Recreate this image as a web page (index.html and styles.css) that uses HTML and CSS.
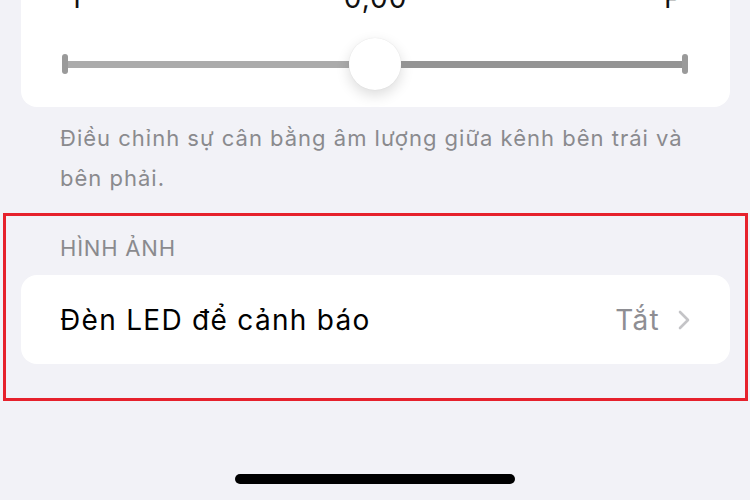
FILE: index.html
```html
<!DOCTYPE html>
<html lang="vi">
<head>
  <meta charset="UTF-8">
  <title>Âm thanh/Hình ảnh</title>
  <link rel="stylesheet" href="styles.css">
</head>
<body>
  <div class="screen">
    <div class="card balance">
      <div class="balance-labels">
        <span>T</span>
        <span>0,00</span>
        <span>P</span>
      </div>
      <div class="slider">
        <span class="cap"></span>
        <div class="track track-left"></div>
        <div class="thumb"></div>
        <div class="track track-right"></div>
        <span class="cap"></span>
      </div>
    </div>

    <p class="footnote">Điều chỉnh sự cân bằng âm lượng giữa kênh bên trái và bên phải.</p>

    <div class="highlight">
      <div class="section-title">HÌNH ẢNH</div>
      <div class="card row">
        <span class="row-label">Đèn LED để cảnh báo</span>
        <span class="row-value">Tắt</span>
        <svg class="chevron" width="12" height="20" viewBox="0 0 12 20">
          <path d="M2 2l8 8-8 8" fill="none" stroke="#c4c4c7" stroke-width="2.6" stroke-linecap="round" stroke-linejoin="round"/>
        </svg>
      </div>
    </div>

    <div class="home-indicator"></div>
  </div>
</body>
</html>
```

FILE: styles.css
```css
* {
  box-sizing: border-box;
}

body {
  margin: 0;
  background-color: #f2f2f7;
  font-family: 'Inter', 'Noto Sans', sans-serif;
  overflow: hidden;
}

.screen {
  height: 500px;
  display: flex;
  flex-direction: column;
}

.card {
  background-color: white;
  border-radius: 16px;
}

/* balance slider card, scrolled partly off the top */
.balance {
  margin: -39px 20px 0 21px;
  padding: 20px 42px 17px 41px;
}

.balance-labels {
  display: flex;
  justify-content: space-between;
  padding: 0 5px 0 6px;
  font-size: 28px;
  line-height: 34px;
  letter-spacing: 1px;
  color: #111;
}

.slider {
  display: flex;
  align-items: center;
  height: 52px;
  margin-top: 23px;
}

.cap {
  width: 6px;
  height: 20px;
  border-radius: 3px;
  background-color: #9a9a9a;
}

.track {
  flex: 1;
  height: 7px;
}

.track-left {
  background-color: #ababab;
}

.track-right {
  background-color: #949494;
}

.thumb {
  width: 52px;
  height: 52px;
  border-radius: 50%;
  background-color: white;
  box-shadow: 0 5px 14px rgba(0, 0, 0, 0.14), 0 0 1px rgba(0, 0, 0, 0.12);
}

.footnote {
  margin: 11px 40px 0 60px;
  font-size: 22px;
  line-height: 40px;
  letter-spacing: 1px;
  color: #8a8a8e;
}

.highlight {
  margin: 15px 2px 0 3px;
  padding: 20px 0 34px;
  border: 3px solid #e6212c;
}

.section-title {
  padding-left: 54px;
  font-size: 22px;
  line-height: 24px;
  letter-spacing: 0.8px;
  color: #8a8a8e;
}

.row {
  display: flex;
  align-items: center;
  height: 89px;
  margin: 15px 15px 0;
  padding: 0 40px 0 39px;
}

.row-label {
  flex: 1;
  font-size: 28px;
  letter-spacing: 1.3px;
  color: #000;
}

.row-value {
  font-size: 28px;
  letter-spacing: 1.3px;
  color: #8e8e93;
}

.chevron {
  margin-left: 18px;
}

.home-indicator {
  width: 280px;
  height: 10px;
  margin: 73px auto 0;
  border-radius: 5px;
  background-color: #000;
}
```
